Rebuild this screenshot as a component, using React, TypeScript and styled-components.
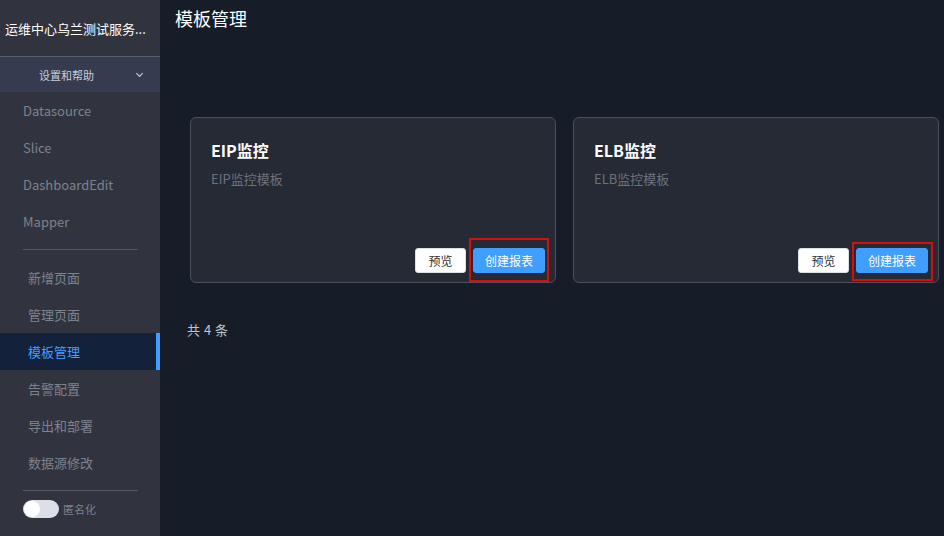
import * as React from 'react';
import styled, { createGlobalStyle } from 'styled-components';

const GlobalStyle = createGlobalStyle`
  html, body { margin: 0; padding: 0; height: 100%; }
  body {
    font-family: "Microsoft YaHei", "Noto Sans CJK SC", "Liberation Sans", sans-serif;
    background: #171d28;
    overflow: hidden;
  }
  #root { height: 100%; }
`;

const Page = styled.div`
  display: flex;
  width: 944px;
  height: 536px;
`;

const Sidebar = styled.aside`
  width: 160px;
  flex-shrink: 0;
  background: #31343e;
  display: flex;
  flex-direction: column;
`;

const Brand = styled.div`
  height: 56px;
  padding: 0 0 0 5px;
  display: flex;
  align-items: center;
  color: #ffffff;
  font-size: 13px;
  white-space: nowrap;
  overflow: hidden;
  border-bottom: 1px solid #5a5e6a;
`;

const SettingsRow = styled.div`
  height: 35px;
  background: #363b4f;
  display: flex;
  align-items: center;
  justify-content: space-between;
  padding: 0 16px 0 39px;
  color: #c9ccd4;
  font-size: 11px;
  > svg { width: 9px; height: 9px; }
`;

const Menu = styled.ul`
  list-style: none;
  margin: 0;
  padding: 0;
`;

const MenuItem = styled.li<{ $active?: boolean; $indent?: number }>`
  height: 37px;
  display: flex;
  align-items: center;
  padding-left: ${p => p.$indent ?? 23}px;
  font-size: 13px;
  color: ${p => (p.$active ? '#409eff' : '#7d828e')};
  background: ${p => (p.$active ? '#14213a' : 'transparent')};
  box-shadow: ${p => (p.$active ? 'inset -4px 0 0 #409eff' : 'none')};
`;

const Divider = styled.hr`
  border: none;
  height: 1px;
  background: #555966;
  margin: 9px 22px 9px 23px;
`;

const ToggleRow = styled.label`
  display: flex;
  align-items: center;
  gap: 4px;
  padding-left: 23px;
  color: #7d828e;
  font-size: 11px;
`;

const Switch = styled.span`
  width: 36px;
  height: 18px;
  border-radius: 9px;
  background: #dcdfe6;
  position: relative;
  &::after {
    content: '';
    position: absolute;
    left: 1px;
    top: 1px;
    width: 16px;
    height: 16px;
    border-radius: 50%;
    background: #ffffff;
  }
`;

const Main = styled.main`
  flex: 1;
  padding: 6px 6px 0 15px;
`;

const Title = styled.h1`
  margin: 0;
  color: #ffffff;
  font-size: 18px;
  font-weight: normal;
  line-height: 24px;
`;

const CardGrid = styled.div`
  display: grid;
  grid-template-columns: 366px 366px;
  column-gap: 17px;
  margin: 87px 0 0 15px;
`;

const Card = styled.div`
  height: 166px;
  box-sizing: border-box;
  border: 1px solid #4b4f5b;
  border-radius: 6px;
  background: #262a35;
  padding: 21px 10px 9px 20px;
  display: flex;
  flex-direction: column;
`;

const CardTitle = styled.div`
  color: #ffffff;
  font-size: 16px;
  font-weight: bold;
  line-height: 22px;
`;

const CardDesc = styled.div`
  color: #6c717c;
  font-size: 13px;
  margin-top: 8px;
`;

const Actions = styled.div`
  margin-top: auto;
  display: flex;
  justify-content: flex-end;
  align-items: center;
  gap: 7px;
`;

const Button = styled.button<{ $primary?: boolean }>`
  height: 25px;
  padding: 0;
  width: ${p => (p.$primary ? '72px' : '51px')};
  border-radius: 3px;
  border: 1px solid ${p => (p.$primary ? '#409eff' : '#dcdfe6')};
  background: ${p => (p.$primary ? '#409eff' : '#ffffff')};
  color: ${p => (p.$primary ? '#ffffff' : '#303133')};
  font-family: inherit;
  font-size: 12px;
`;

const Marked = styled.span`
  position: relative;
  display: inline-flex;
`;

/* red annotation box drawn over the button */
const Highlight = styled.span<{ $t: number; $r: number; $b: number; $l: number }>`
  position: absolute;
  top: ${p => -p.$t}px;
  right: ${p => -p.$r}px;
  bottom: ${p => -p.$b}px;
  left: ${p => -p.$l}px;
  border: 2px solid #d40f0f;
  pointer-events: none;
`;

const Total = styled.div`
  margin: 37px 0 0 12px;
  color: #c0c4cc;
  font-size: 13px;
  letter-spacing: 0.5px;
`;

const templates = [
  { name: 'EIP监控', desc: 'EIP监控模板', box: { t: 10, r: 4, b: 9, l: 4 } },
  { name: 'ELB监控', desc: 'ELB监控模板', box: { t: 6, r: 5, b: 8, l: 4 } },
];

export default function App() {
  return (
    <Page>
      <GlobalStyle />
      <Sidebar>
        <Brand>运维中心乌兰测试服务...</Brand>
        <SettingsRow>
          <span>设置和帮助</span>
          <svg viewBox="0 0 10 10" fill="none" stroke="#c9ccd4" strokeWidth="1.3">
            <path d="M1.5 3.5 L5 7 L8.5 3.5" />
          </svg>
        </SettingsRow>
        <Menu>
          <MenuItem>Datasource</MenuItem>
          <MenuItem>Slice</MenuItem>
          <MenuItem>DashboardEdit</MenuItem>
          <MenuItem>Mapper</MenuItem>
        </Menu>
        <Divider />
        <Menu>
          <MenuItem $indent={28}>新增页面</MenuItem>
          <MenuItem $indent={28}>管理页面</MenuItem>
          <MenuItem $indent={28} $active>模板管理</MenuItem>
          <MenuItem $indent={28}>告警配置</MenuItem>
          <MenuItem $indent={28}>导出和部署</MenuItem>
          <MenuItem $indent={28}>数据源修改</MenuItem>
        </Menu>
        <Divider />
        <ToggleRow>
          <Switch />
          <span>匿名化</span>
        </ToggleRow>
      </Sidebar>
      <Main>
        <Title>模板管理</Title>
        <CardGrid>
          {templates.map(t => (
            <Card key={t.name}>
              <CardTitle>{t.name}</CardTitle>
              <CardDesc>{t.desc}</CardDesc>
              <Actions>
                <Button>预览</Button>
                <Marked>
                  <Button $primary>创建报表</Button>
                  <Highlight $t={t.box.t} $r={t.box.r} $b={t.box.b} $l={t.box.l} />
                </Marked>
              </Actions>
            </Card>
          ))}
        </CardGrid>
        <Total>共 4 条</Total>
      </Main>
    </Page>
  );
}
